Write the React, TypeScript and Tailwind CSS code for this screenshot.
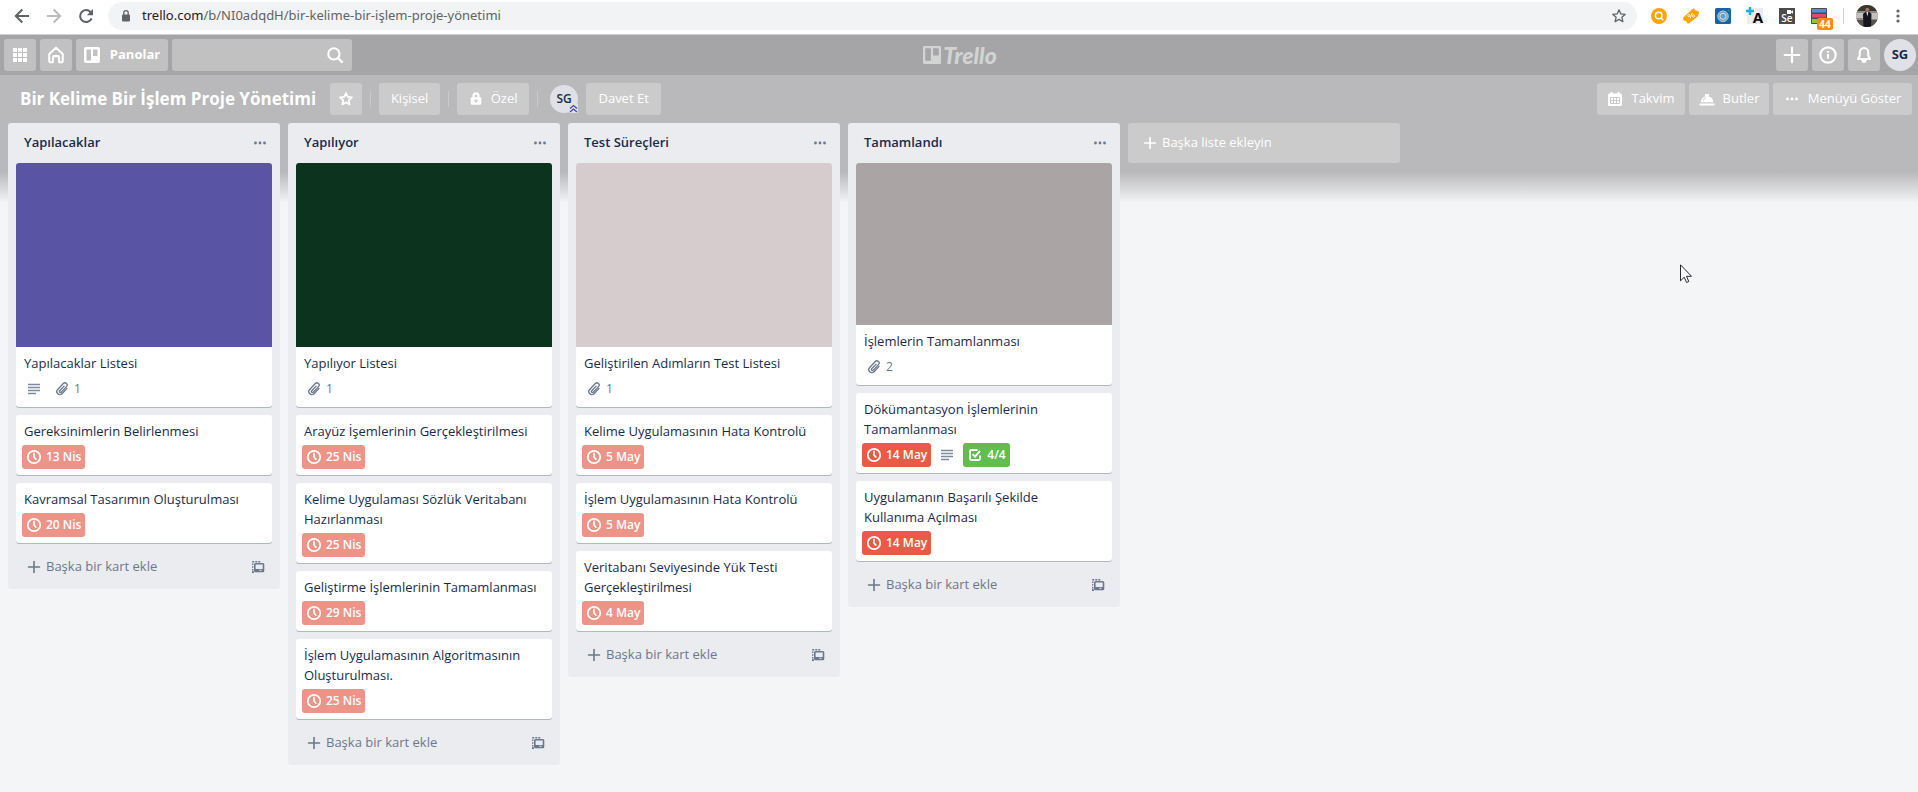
import type { ReactNode } from "react";

type Badge =
  | { kind: "date"; text: string; tone: "past" | "late" }
  | { kind: "description" }
  | { kind: "attachment"; text: string }
  | { kind: "checklist"; text: string };

type CardData = { title: string; cover?: string; badges: Badge[] };
type ListData = { name: string; cards: CardData[] };

const past = (text: string): Badge => ({ kind: "date", text, tone: "past" });
const late = (text: string): Badge => ({ kind: "date", text, tone: "late" });

const lists: ListData[] = [
  {
    name: "Yapılacaklar",
    cards: [
      {
        title: "Yapılacaklar Listesi",
        cover: "h-[184px] bg-[#5954a4]",
        badges: [{ kind: "description" }, { kind: "attachment", text: "1" }],
      },
      { title: "Gereksinimlerin Belirlenmesi", badges: [past("13 Nis")] },
      { title: "Kavramsal Tasarımın Oluşturulması", badges: [past("20 Nis")] },
    ],
  },
  {
    name: "Yapılıyor",
    cards: [
      {
        title: "Yapılıyor Listesi",
        cover: "h-[184px] bg-[#0c331e]",
        badges: [{ kind: "attachment", text: "1" }],
      },
      { title: "Arayüz İşemlerinin Gerçekleştirilmesi", badges: [past("25 Nis")] },
      { title: "Kelime Uygulaması Sözlük Veritabanı Hazırlanması", badges: [past("25 Nis")] },
      { title: "Geliştirme İşlemlerinin Tamamlanması", badges: [past("29 Nis")] },
      { title: "İşlem Uygulamasının Algoritmasının Oluşturulması.", badges: [past("25 Nis")] },
    ],
  },
  {
    name: "Test Süreçleri",
    cards: [
      {
        title: "Geliştirilen Adımların Test Listesi",
        cover: "h-[184px] bg-[#d6cccd]",
        badges: [{ kind: "attachment", text: "1" }],
      },
      { title: "Kelime Uygulamasının Hata Kontrolü", badges: [past("5 May")] },
      { title: "İşlem Uygulamasının Hata Kontrolü", badges: [past("5 May")] },
      { title: "Veritabanı Seviyesinde Yük Testi Gerçekleştirilmesi", badges: [past("4 May")] },
    ],
  },
  {
    name: "Tamamlandı",
    cards: [
      {
        title: "İşlemlerin Tamamlanması",
        cover: "h-[162px] bg-[#aaa4a4]",
        badges: [{ kind: "attachment", text: "2" }],
      },
      {
        title: "Dökümantasyon İşlemlerinin Tamamlanması",
        badges: [late("14 May"), { kind: "description" }, { kind: "checklist", text: "4/4" }],
      },
      { title: "Uygulamanın Başarılı Şekilde Kullanıma Açılması", badges: [late("14 May")] },
    ],
  },
];

function Icon({ children, className = "size-4" }: { children: ReactNode; className?: string }) {
  return (
    <svg viewBox="0 0 16 16" fill="none" stroke="currentColor" className={`shrink-0 ${className}`} aria-hidden="true">
      {children}
    </svg>
  );
}

const ClockIcon = () => (
  <Icon>
    <circle cx="8" cy="8" r="6.2" strokeWidth="1.8" />
    <path d="M8 4.4V8l1.9 2.2" strokeWidth="1.7" strokeLinecap="round" strokeLinejoin="round" />
  </Icon>
);

const DescriptionIcon = () => (
  <Icon>
    <path d="M2 3.5h12M2 6.5h12M2 9.5h12M2 12.5h8" strokeWidth="1.4" />
  </Icon>
);

const ClipIcon = () => (
  <Icon>
    <path
      d="M13 7.400 8.100 12.700a3 3 0 0 1-4.400-4.200l5.600-6a2.200 2.200 0 0 1 3.200 3.100L7.200 11.200a1 1 0 0 1-1.500-1.400l4.400-4.700"
      strokeWidth="1.3"
      strokeLinecap="round"
      strokeLinejoin="round"
    />
  </Icon>
);

const CheckIcon = () => (
  <Icon>
    <path d="M10.5 3H4.200A1.200 1.200 0 0 0 3 4.200v7.600A1.200 1.200 0 0 0 4.200 13h7.600a1.200 1.200 0 0 0 1.200-1.200V8.500" strokeWidth="1.8" />
    <path d="M5.600 7.200 8 9.600 13 4" strokeWidth="1.9" />
  </Icon>
);

const PlusIcon = () => (
  <Icon>
    <path d="M8 2.500v11M2.500 8h11" strokeWidth="1.6" strokeLinecap="round" />
  </Icon>
);

const DotsIcon = () => (
  <Icon>
    <g fill="currentColor" stroke="none">
      <circle cx="3.5" cy="8" r="1.4" />
      <circle cx="8" cy="8" r="1.4" />
      <circle cx="12.5" cy="8" r="1.4" />
    </g>
  </Icon>
);

const TemplateIcon = () => (
  <Icon>
    <path
      d="M2.700 11.500V10M2.700 8.800V7.200M2.700 6V4.500M2.200 2.700h2M5.300 2.700h2M8.300 2.700h2M2.700 12v1.200h1.300"
      strokeWidth="1.4"
    />
    <rect x="4.800" y="4.800" width="8.700" height="7.700" rx=".8" strokeWidth="1.6" />
    <path d="M5 11.200h8.500" strokeWidth="2.4" />
    <path d="M9.300 11.300h2.200" stroke="#ebecf0" strokeWidth="1" />
  </Icon>
);

const BoardsIcon = () => (
  <Icon>
    <path
      fill="currentColor"
      stroke="none"
      fillRule="evenodd"
      d="M2 0h12a2 2 0 0 1 2 2v12a2 2 0 0 1-2 2H2a2 2 0 0 1-2-2V2a2 2 0 0 1 2-2Zm.5 2.5v11h4.500v-11Zm6.500 0v6.500h4.500v-6.500Z"
    />
  </Icon>
);

function BadgeView({ badge }: { badge: Badge }) {
  if (badge.kind === "description")
    return (
      <span className="flex size-6 items-center justify-center text-[#7e8a9e]">
        <DescriptionIcon />
      </span>
    );
  if (badge.kind === "attachment")
    return (
      <span className="flex h-6 items-center gap-1 px-1 text-[#6b778c]">
        <ClipIcon />
        {badge.text}
      </span>
    );
  const tone =
    badge.kind === "checklist" ? "bg-[#61bd4f]" : badge.tone === "late" ? "bg-[#eb5a46]" : "bg-[#ec9488]";
  return (
    <span className={`flex h-6 items-center gap-1 rounded-[3px] px-1 font-semibold text-white ${tone}`}>
      {badge.kind === "checklist" ? <CheckIcon /> : <ClockIcon />}
      {badge.text}
    </span>
  );
}

function Card({ card }: { card: CardData }) {
  return (
    <article className="overflow-hidden rounded-[3px] bg-white shadow-[0_1px_0_rgba(9,30,66,0.25)]">
      {card.cover && <div className={card.cover} />}
      <div className="px-2 pt-1.5 pb-0.5">
        <h3 className="mb-1 pr-1 text-[13px] leading-5 text-[#172b4d]">{card.title}</h3>
        <div className="-ml-0.5 flex gap-1 pb-1 text-xs">
          {card.badges.map((b, i) => (
            <BadgeView key={i} badge={b} />
          ))}
        </div>
      </div>
    </article>
  );
}

function List({ list }: { list: ListData }) {
  return (
    <section className="w-[272px] shrink-0 rounded-[3px] bg-[#ebecf0]">
      <header className="flex h-10 items-center justify-between pr-3 pl-4">
        <h2 className="text-[13px] font-semibold text-[#172b4d]">{list.name}</h2>
        <button type="button" aria-label="Liste işlemleri" className="text-[#6b778c]">
          <DotsIcon />
        </button>
      </header>
      <div className="flex flex-col gap-2 px-2">
        {list.cards.map((c) => (
          <Card key={c.title} card={c} />
        ))}
      </div>
      <footer className="flex h-[46px] items-center justify-between pt-0.5 pr-3.5 pl-[18px] text-[#6b778c]">
        <button type="button" className="flex items-center gap-1 text-[13px]">
          <PlusIcon />
          Başka bir kart ekle
        </button>
        <button type="button" aria-label="Şablondan oluştur">
          <TemplateIcon />
        </button>
      </footer>
    </section>
  );
}

function BrowserBar() {
  return (
    <div className="flex h-[35px] items-center border-b border-[#cfd0d3] bg-white pb-0.5 text-[#5f6368]">
      <div className="flex shrink-0 gap-4 pl-3.5">
        <button type="button" aria-label="Geri">
          <Icon>
            <path d="M15 8H2M8.300 1.500 1.800 8l6.500 6.500" strokeWidth="2" />
          </Icon>
        </button>
        <button type="button" aria-label="İleri" className="text-[#babcbe]">
          <Icon>
            <path d="M1 8h13M7.700 1.500 14.200 8l-6.500 6.500" strokeWidth="2" />
          </Icon>
        </button>
        <button type="button" aria-label="Yenile">
          <Icon>
            <path d="M13.600 10.500A6 6 0 1 1 12.500 4" strokeWidth="2" />
            <path d="M15 1v6.200H8.800Z" fill="currentColor" stroke="none" />
          </Icon>
        </button>
      </div>
      <div className="ml-3.5 flex h-7 flex-1 items-center rounded-full bg-[#f1f3f4] px-2.5">
        <svg viewBox="0 0 16 16" className="size-4 shrink-0" aria-hidden="true">
          <rect x="4" y="6.5" width="8" height="7" rx="1" fill="#5f6368" />
          <path d="M5.800 7V4.800a2.200 2.200 0 0 1 4.400 0V7" fill="none" stroke="#5f6368" strokeWidth="1.3" />
        </svg>
        <span className="ml-2 flex-1 font-['Noto_Sans',sans-serif] text-[13px]">
          <span className="text-[#202124]">trello.com</span>/b/NI0adqdH/bir-kelime-bir-işlem-proje-yönetimi
        </span>
        <button type="button" aria-label="Yer işareti ekle">
          <Icon>
            <path d="m8 1.800 1.800 4.100 4.500.4-3.400 3 1 4.400L8 11.400l-3.900 2.300 1-4.400-3.400-3 4.500-.4Z" strokeWidth="1.3" strokeLinejoin="round" />
          </Icon>
        </button>
      </div>
      <div className="flex shrink-0 items-center gap-4 pl-3.5">
        <svg viewBox="0 0 16 16" className="size-4" aria-hidden="true">
          <circle cx="8" cy="8" r="8" fill="#ffa400" />
          <circle cx="7.700" cy="7.500" r="3.300" fill="none" stroke="#fff" strokeWidth="1.5" />
          <path d="m10 10 2.300 2.300" stroke="#fff" strokeWidth="1.5" />
        </svg>
        <svg viewBox="0 0 16 16" className="size-4" aria-hidden="true">
          <path
            d="M.2 9.500 9.500 1q1-.8 2 0l.6.800q.3 1 1.400.8l2 1q.9 1 .2 2l-1 2.800L6 15.200q-1 .7-1.900 0l-.6-1.500q-.5-.9-1.500-.8l-1.400-.7Q-.3 10.700.2 9.500Z"
            fill="#ffa400"
          />
          <circle cx="5.800" cy="7.500" r="1.100" fill="none" stroke="#fff" strokeWidth=".9" />
          <circle cx="10.500" cy="8" r="1.100" fill="none" stroke="#fff" strokeWidth=".9" />
          <path d="m9.200 5-2 5.300" stroke="#fff" strokeWidth=".9" />
        </svg>
        <svg viewBox="0 0 16 16" className="size-4" aria-hidden="true">
          <rect width="16" height="16" rx="1.5" fill="#1763a8" />
          <circle cx="8" cy="8.300" r="5.300" fill="#7fa8b5" stroke="#a5cbe3" />
          <circle cx="8" cy="8.300" r="3" fill="#5d9fd0" stroke="#cfe2e6" />
          <circle cx="13.500" cy="2.500" r=".8" fill="#3fae5c" />
        </svg>
        <span className="relative flex size-4 items-end justify-end bg-[#ececec] text-[15px] leading-[13px] font-bold text-black">
          A
          <svg viewBox="0 0 8 8" className="absolute -top-px -left-px size-2" aria-hidden="true">
            <path d="M4 0v8M0 4h8" stroke="#12b4e8" strokeWidth="2.4" />
          </svg>
        </span>
        <span className="relative flex size-4 items-end justify-center bg-[#4b4b4b] text-[10px] leading-3 font-semibold text-white">
          Se
          <svg viewBox="0 0 6 4" className="absolute top-0.5 right-0.5 h-1 w-1.5" aria-hidden="true">
            <path d="M0 0h4v1.500L6 .3v3.400L4 2.500V4H0Z" fill="#fff" />
          </svg>
        </span>
        <span className="relative size-4">
          <svg viewBox="0 0 16 16" className="size-4" aria-hidden="true">
            <rect width="16" height="16" rx="1" fill="#4a4a58" />
            <rect x="1" y="1" width="14" height="3.5" fill="#4f8fe0" />
            <rect x="1" y="6" width="14" height="3.5" fill="#e5486b" />
            <rect x="1" y="11" width="14" height="4" fill="#8cc63f" />
          </svg>
          <span className="absolute top-2.5 left-1.5 flex h-3 w-4 items-center justify-center rounded-[2px] bg-[#ff8c00] text-[10px] font-bold text-white">
            44
          </span>
        </span>
      </div>
      <div className="flex shrink-0 items-center gap-3 pr-3 pl-4">
        <span className="h-4 w-px bg-[#cfd0d3]" />
        <svg viewBox="0 0 22 22" className="size-[22px] rounded-full" aria-hidden="true">
          <rect width="22" height="22" fill="#8e8a84" />
          <path d="M0 0h22v6H0Z" fill="#3b352f" />
          <path d="M0 8h8v5H0ZM14 8h8v6h-8Z" fill="#c3c1bf" />
          <path d="M0 15h22v7H0Z" fill="#56524d" />
          <path d="M7.500 22 7 9l3-2.500h3L15.500 9 15 22Z" fill="#15151d" />
          <path d="M10.300 7h2l-.9 4.500Z" fill="#e6e2e4" />
          <circle cx="11.300" cy="4.700" r="2" fill="#a5765f" />
        </svg>
        <button type="button" aria-label="Menü">
          <Icon>
            <g fill="currentColor" stroke="none">
              <circle cx="8" cy="3" r="1.6" />
              <circle cx="8" cy="8" r="1.6" />
              <circle cx="8" cy="13" r="1.6" />
            </g>
          </Icon>
        </button>
      </div>
    </div>
  );
}

const topButton = "flex h-8 shrink-0 items-center justify-center rounded-[3px] bg-[#c1c1c1] text-white";
const boardButton =
  "flex h-8 shrink-0 items-center justify-center gap-2 rounded-[3px] bg-[#cbcbcb] text-[13px] font-medium text-white";

function TopBar() {
  return (
    <header className="flex h-10 items-center bg-[#a5a5a7] pr-0.5 pl-1">
      <div className="flex flex-1 gap-1">
        <button type="button" aria-label="Uygulamalar" className={`${topButton} w-8`}>
          <Icon>
            <path
              fill="currentColor"
              stroke="none"
              d="M1 1h4v4H1ZM6 1h4v4H6ZM11 1h4v4h-4ZM1 6h4v4H1ZM6 6h4v4H6ZM11 6h4v4h-4ZM1 11h4v4H1ZM6 11h4v4H6ZM11 11h4v4h-4Z"
            />
          </Icon>
        </button>
        <button type="button" aria-label="Ana sayfa" className={`${topButton} w-8`}>
          <Icon className="size-[18px]">
            <path
              d="M2 7.200 8 1.600l6 5.600v6.300a.9.9 0 0 1-.9.9h-2.400V10a1 1 0 0 0-1-1H6.300a1 1 0 0 0-1 1v4.400H2.900a.9.9 0 0 1-.9-.9Z"
              strokeWidth="1.8"
              strokeLinejoin="round"
            />
          </Icon>
        </button>
        <button type="button" className={`${topButton} w-[92px] gap-2.5 text-[13px] font-bold`}>
          <BoardsIcon />
          Panolar
        </button>
        <label className={`${topButton} w-[180px] pr-2`}>
          <input type="text" aria-label="Ara" className="min-w-0 flex-1 bg-transparent px-2 outline-none" />
          <Icon className="size-[18px]">
            <circle cx="7" cy="7" r="5" strokeWidth="1.8" />
            <path d="m10.700 10.700 4 4" strokeWidth="2.2" />
          </Icon>
        </label>
      </div>
      <a href="#" aria-label="Trello" className="flex items-center gap-0.5 text-[#d2d4d3]">
        <Icon className="size-[18px]">
          <path
            fill="currentColor"
            stroke="none"
            fillRule="evenodd"
            d="M1 0h14a1 1 0 0 1 1 1v14a1 1 0 0 1-1 1H1a1 1 0 0 1-1-1V1a1 1 0 0 1 1-1Zm1 2v11h5V2Zm7 0v6.500h5V2Z"
          />
        </Icon>
        <span className="font-['Lato',sans-serif] text-[23px] leading-6 font-black italic">Trello</span>
      </a>
      <div className="flex flex-1 justify-end gap-1">
        <button type="button" aria-label="Oluştur" className={`${topButton} w-8`}>
          <Icon className="size-[18px]">
            <path d="M8 1.500v13M1.500 8h13" strokeWidth="1.9" strokeLinecap="round" />
          </Icon>
        </button>
        <button type="button" aria-label="Bilgi" className={`${topButton} w-8`}>
          <Icon className="size-[18px]">
            <circle cx="8" cy="8" r="6.8" strokeWidth="1.9" />
            <path d="M8 7.200v4.200M8 4.400v1.500" strokeWidth="1.9" />
          </Icon>
        </button>
        <button type="button" aria-label="Bildirimler" className={`${topButton} w-8`}>
          <Icon className="size-[18px]">
            <path
              d="M8 1.700a3.800 3.800 0 0 0-3.800 3.800V8.800L2.700 11.200v.4h10.600v-.4l-1.500-2.400V5.500A3.800 3.800 0 0 0 8 1.700Z"
              strokeWidth="1.8"
              strokeLinejoin="round"
            />
            <path d="M6 12.500a2 2 0 0 0 4 0Z" fill="currentColor" />
          </Icon>
        </button>
        <button
          type="button"
          aria-label="Hesap"
          className="size-8 rounded-full bg-[#dfe1e6] text-[13px] font-bold text-[#172b4d]"
        >
          SG
        </button>
      </div>
    </header>
  );
}

const Divider = () => <span className="mx-2 h-4 w-px shrink-0 bg-[#cacacb]" />;

function BoardHeader() {
  return (
    <div className="flex h-12 items-center pr-1.5 pl-5 text-white">
      <h1 className="mr-3.5 text-[17px] font-bold whitespace-nowrap">Bir Kelime Bir İşlem Proje Yönetimi</h1>
      <button type="button" aria-label="Yıldızla" className={`${boardButton} w-8`}>
        <Icon>
          <path d="m8 2 1.700 3.900 4.300.4-3.200 2.900.9 4.300L8 11.300l-3.700 2.200.9-4.300L2 6.300l4.300-.4Z" strokeWidth="1.7" strokeLinejoin="round" />
        </Icon>
      </button>
      <Divider />
      <button type="button" className={`${boardButton} w-[61px]`}>
        Kişisel
      </button>
      <Divider />
      <button type="button" className={`${boardButton} w-[72px]`}>
        <Icon className="size-3.5">
          <rect x="2" y="6" width="12" height="8.5" rx="1.2" fill="currentColor" stroke="none" />
          <path d="M5.200 7V4.500a2.800 2.800 0 0 1 5.600 0V7" strokeWidth="2.6" />
          <path d="M8 8v4.500M5.800 10.200h4.400" stroke="#cbcbcb" strokeWidth="1.3" />
        </Icon>
        Özel
      </button>
      <Divider />
      <span className="relative mr-2 ml-1 flex size-7 shrink-0 items-center justify-center rounded-full bg-[#dfe1e6] text-xs font-semibold text-[#172b4d]">
        SG
        <svg viewBox="0 0 9 9" className="absolute right-0 bottom-0 size-[9px] bg-[#dfe1e6]" aria-hidden="true">
          <path d="m1 4.500 3.500-3 3.500 3M1 8l3.500-3L8 8" fill="none" stroke="#4b45a8" strokeWidth="1.3" />
        </svg>
      </span>
      <button type="button" className={`${boardButton} w-[75px]`}>
        Davet Et
      </button>
      <div className="ml-auto flex gap-1">
        <button type="button" className={`${boardButton} w-[88px]`}>
          <Icon>
            <rect x="1" y="2.500" width="14" height="12.5" rx="1.5" fill="currentColor" stroke="none" />
            <path d="M4.500 1v3M11.500 1v3" strokeWidth="2" />
            <path d="M3.500 6.500h9v6h-9ZM3.500 9.500h9M6.500 6.500v6M9.500 6.500v6" stroke="#c4c4c4" strokeWidth=".9" />
          </Icon>
          Takvim
        </button>
        <button type="button" className={`${boardButton} w-20`}>
          <Icon>
            <path d="M1.800 11.200a6.200 6.200 0 0 1 12.400 0Z" fill="currentColor" stroke="none" />
            <path d="M1.300 13.500h13.400" strokeWidth="1.8" strokeLinecap="round" />
            <path d="M6.800 4h2.400" strokeWidth="2" strokeLinecap="round" />
            <path d="M4.300 9.500q.5-2 2.500-2.700" stroke="#cbcbcb" strokeWidth="1" />
          </Icon>
          Butler
        </button>
        <button type="button" className={`${boardButton} w-[139px]`}>
          <DotsIcon />
          Menüyü Göster
        </button>
      </div>
    </div>
  );
}

export default function App() {
  return (
    <div className="flex min-h-screen flex-col bg-[#f4f5f7] font-['Open_Sans','Noto_Sans',sans-serif]">
      <BrowserBar />
      <TopBar />
      <main className="flex-1 bg-[linear-gradient(to_bottom,#b9b9bb_0px,#b9b9bb_97px,#f4f5f7_128px)]">
        <BoardHeader />
        <div className="flex items-start gap-2 px-2 pb-2">
          {lists.map((l) => (
            <List key={l.name} list={l} />
          ))}
          <button
            type="button"
            className="flex h-10 w-[272px] shrink-0 items-center gap-1 rounded-[3px] bg-[#cbcbcb] px-3.5 text-[13px] font-medium text-white"
          >
            <PlusIcon />
            Başka liste ekleyin
          </button>
        </div>
      </main>
      <svg viewBox="0 0 12 19" className="pointer-events-none absolute top-66 left-420 h-[19px] w-3" aria-hidden="true">
        <path d="M.5.8v16l3.700-3.600 2.400 5.300 2.200-1-2.300-5.200h5Z" fill="#fff" stroke="#10131c" strokeWidth=".9" />
      </svg>
    </div>
  );
}
